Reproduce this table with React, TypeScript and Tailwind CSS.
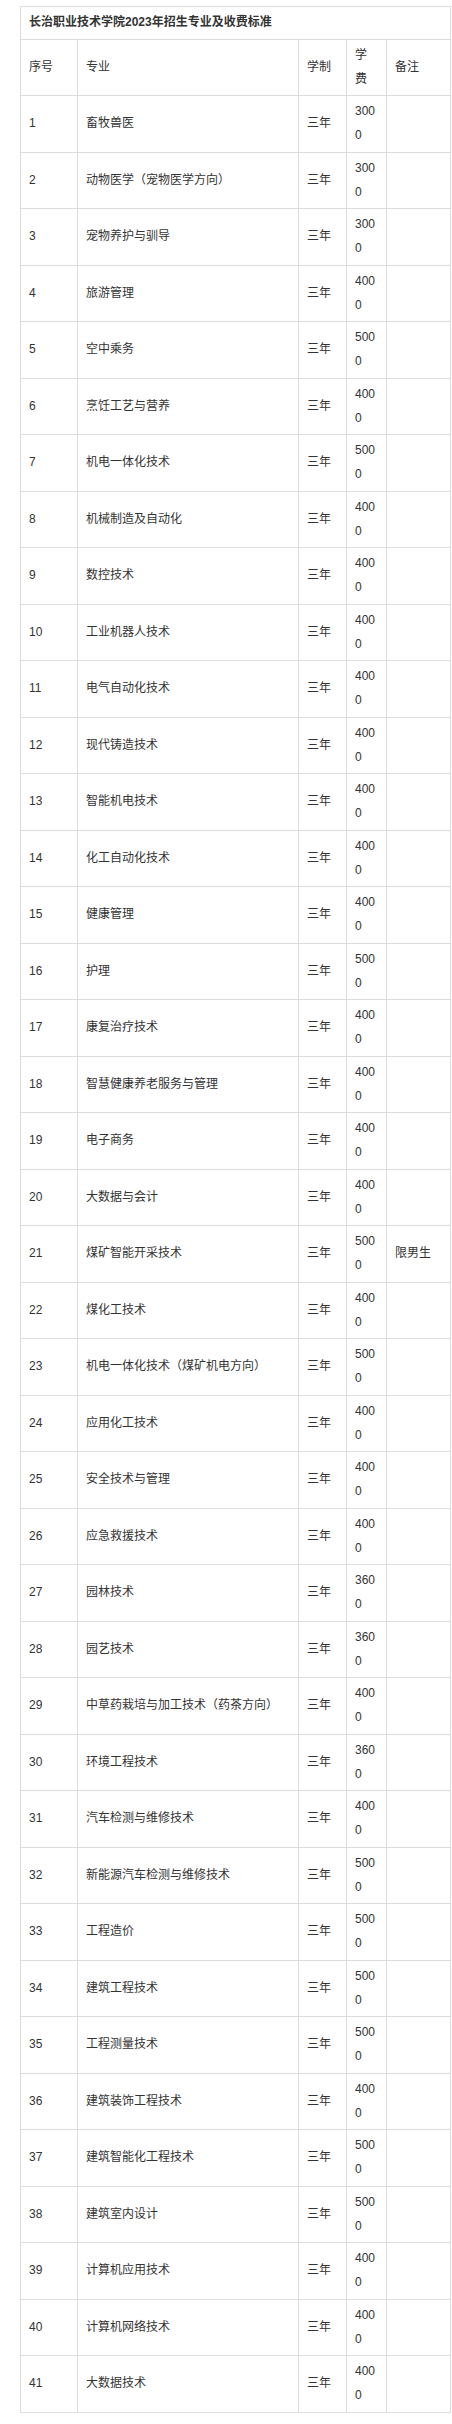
const rows: [string, string, string?][] = [
  ["畜牧兽医", "3000"],
  ["动物医学（宠物医学方向）", "3000"],
  ["宠物养护与驯导", "3000"],
  ["旅游管理", "4000"],
  ["空中乘务", "5000"],
  ["烹饪工艺与营养", "4000"],
  ["机电一体化技术", "5000"],
  ["机械制造及自动化", "4000"],
  ["数控技术", "4000"],
  ["工业机器人技术", "4000"],
  ["电气自动化技术", "4000"],
  ["现代铸造技术", "4000"],
  ["智能机电技术", "4000"],
  ["化工自动化技术", "4000"],
  ["健康管理", "4000"],
  ["护理", "5000"],
  ["康复治疗技术", "4000"],
  ["智慧健康养老服务与管理", "4000"],
  ["电子商务", "4000"],
  ["大数据与会计", "4000"],
  ["煤矿智能开采技术", "5000", "限男生"],
  ["煤化工技术", "4000"],
  ["机电一体化技术（煤矿机电方向）", "5000"],
  ["应用化工技术", "4000"],
  ["安全技术与管理", "4000"],
  ["应急救援技术", "4000"],
  ["园林技术", "3600"],
  ["园艺技术", "3600"],
  ["中草药栽培与加工技术（药茶方向）", "4000"],
  ["环境工程技术", "3600"],
  ["汽车检测与维修技术", "4000"],
  ["新能源汽车检测与维修技术", "5000"],
  ["工程造价", "5000"],
  ["建筑工程技术", "5000"],
  ["工程测量技术", "5000"],
  ["建筑装饰工程技术", "4000"],
  ["建筑智能化工程技术", "5000"],
  ["建筑室内设计", "5000"],
  ["计算机应用技术", "4000"],
  ["计算机网络技术", "4000"],
  ["大数据技术", "4000"],
];

const cell = "border border-[#ddd] px-2 py-1 align-middle text-left break-all";

export default function App() {
  return (
    <div className="bg-white min-h-[2424px] pt-[6px] pl-[20px] text-[12px] leading-[23.75px] text-[#333] font-['Liberation_Sans','Noto_Sans_CJK_SC',sans-serif]">
      <table className="table-fixed border-collapse w-[430px]">
        <colgroup>
          <col className="w-[57px]" />
          <col className="w-[221px]" />
          <col className="w-[48px]" />
          <col className="w-[40px]" />
          <col className="w-[64px]" />
        </colgroup>
        <tbody>
          <tr>
            <td colSpan={5} className={`${cell} font-bold`}>
              长治职业技术学院2023年招生专业及收费标准
            </td>
          </tr>
          <tr>
            <td className={cell}>序号</td>
            <td className={cell}>专业</td>
            <td className={cell}>学制</td>
            <td className={cell}>学费</td>
            <td className={cell}>备注</td>
          </tr>
          {rows.map(([name, fee, note], i) => (
            <tr key={i}>
              <td className={cell}>{i + 1}</td>
              <td className={cell}>{name}</td>
              <td className={cell}>三年</td>
              <td className={cell}>{fee}</td>
              <td className={cell}>{note ?? ""}</td>
            </tr>
          ))}
        </tbody>
      </table>
    </div>
  );
}
